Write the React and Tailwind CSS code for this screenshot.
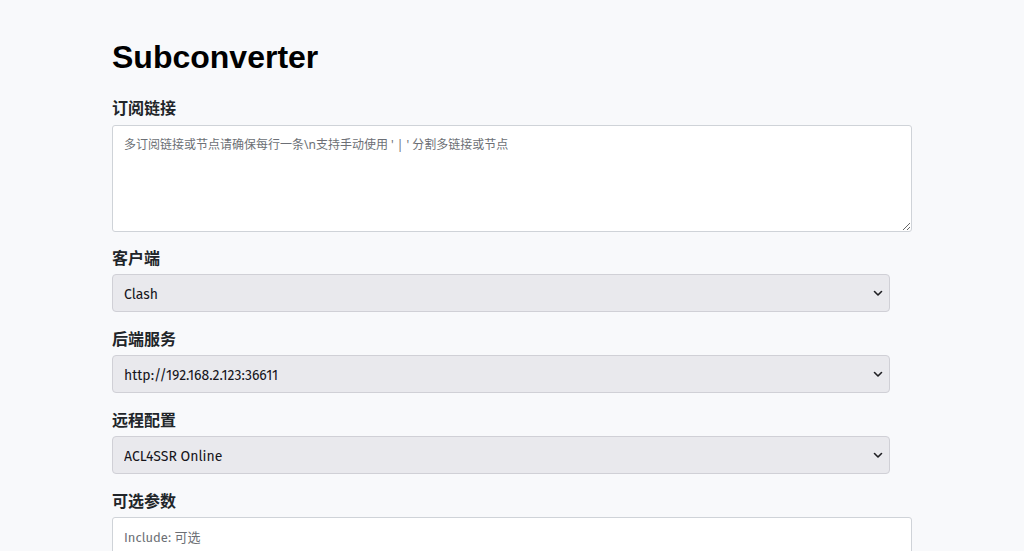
import React from 'react';

const Chevron = () => (
  <svg
    className="pointer-events-none absolute right-[4px] top-1/2 -translate-y-1/2"
    width="16"
    height="16"
    viewBox="0 0 16 16"
    fill="none"
  >
    <path d="M4.5 6.5 8 10l3.5-3.5" stroke="#1f1f23" strokeWidth="1.6" strokeLinecap="round" strokeLinejoin="round" />
  </svg>
);

const SelectField = ({ label, value, options }) => (
  <div className="mb-[15px]">
    <label className="mb-1 block text-[16px] font-semibold leading-6 text-[#212529]">{label}</label>
    <div className="relative w-[778px]">
      <select
        defaultValue={value}
        className="h-[38px] w-full appearance-none rounded-[4px] border border-[#d0d0d6] bg-[#e9e9ed] pt-[2px] pl-[11px] pr-8 font-['Fira_Sans','Noto_Sans_CJK_SC',sans-serif] text-[14px] text-[#15141a] outline-none"
      >
        {options.map((o) => (
          <option key={o} value={o}>
            {o}
          </option>
        ))}
      </select>
      <Chevron />
    </div>
  </div>
);

const App = () => {
  return (
    <div className="min-h-screen bg-[#f8f9fb] font-['Noto_Sans','Noto_Sans_CJK_SC',sans-serif]">
      <div className="mx-auto w-[800px] pt-[39px]">
        <h1 className="mb-[21px] font-['Liberation_Sans',Arial,sans-serif] text-[32px] font-bold leading-9 text-black">
          Subconverter
        </h1>

        <div className="mb-[14px]">
          <label className="mb-[5px] block text-[16px] font-semibold leading-6 text-[#212529]">订阅链接</label>
          <textarea
            className="block h-[107px] w-full rounded-[3px] border border-[#cfd3d8] bg-white px-[11px] py-[10px] text-[12px] leading-[18px] outline-none placeholder:text-[#6c6f75]"
            placeholder="多订阅链接或节点请确保每行一条\n支持手动使用 ' | ' 分割多链接或节点"
          />
        </div>

        <SelectField label="客户端" value="Clash" options={['Clash', 'Surge', 'Quantumult X', 'V2Ray']} />
        <SelectField
          label="后端服务"
          value="http://192.168.2.123:36611"
          options={['http://192.168.2.123:36611', 'http://127.0.0.1:25500']}
        />
        <SelectField label="远程配置" value="ACL4SSR Online" options={['ACL4SSR Online', 'ACL4SSR Online Full']} />

        <div className="mb-[15px]">
          <label className="mb-1 block text-[16px] font-semibold leading-6 text-[#212529]">可选参数</label>
          <input
            className="block h-[40px] w-full rounded-[3px] border border-[#cfd3d8] bg-white px-[11px] font-['Fira_Sans','Noto_Sans_CJK_SC',sans-serif] text-[13px] outline-none placeholder:text-[#6c6f75]"
            placeholder="Include: 可选"
          />
        </div>
      </div>
    </div>
  );
};

export default App;
